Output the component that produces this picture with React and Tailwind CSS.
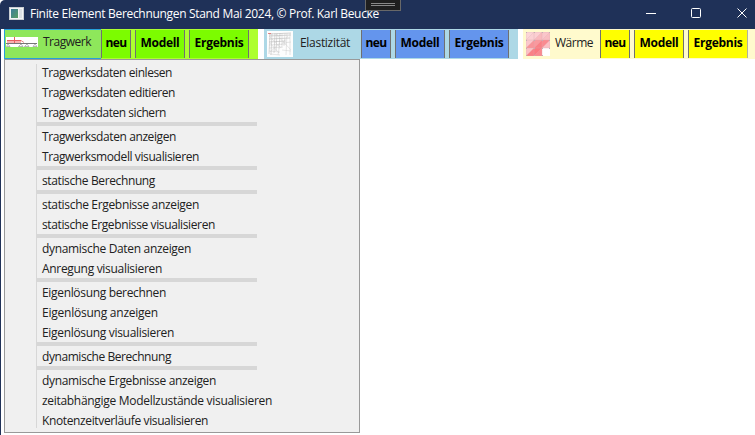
import React from "react";

const sections = [
  [
    ["Tragwerksdaten einlesen", "w-[130px]"],
    ["Tragwerksdaten editieren", "w-[133px]"],
    ["Tragwerksdaten sichern", "w-[124px]"],
  ],
  [
    ["Tragwerksdaten anzeigen", "w-[134px]"],
    ["Tragwerksmodell visualisieren", "w-[157px]"],
  ],
  [["statische Berechnung", "w-[113px]"]],
  [
    ["statische Ergebnisse anzeigen", "w-[157px]"],
    ["statische Ergebnisse visualisieren", "w-[173px]"],
  ],
  [
    ["dynamische Daten anzeigen", "w-[149px]"],
    ["Anregung visualisieren", "w-[120px]"],
  ],
  [
    ["Eigenlösung berechnen", "w-[124px]"],
    ["Eigenlösung anzeigen", "w-[116px]"],
    ["Eigenlösung visualisieren", "w-[132px]"],
  ],
  [["dynamische Berechnung", "w-[129px]"]],
  [
    ["dynamische Ergebnisse anzeigen", "w-[174px]"],
    ["zeitabhängige Modellzustände visualisieren", "w-[230px]"],
    ["Knotenzeitverläufe visualisieren", "w-[166px]"],
  ],
];

// Text whose letter spacing is adjusted so that it fills the width of its box.
function Fit({ className, children }) {
  const box = React.useRef(null);
  const ink = React.useRef(null);
  React.useLayoutEffect(() => {
    const apply = () => {
      ink.current.style.letterSpacing = "0px";
      const natural = ink.current.getBoundingClientRect().width;
      const space = (box.current.clientWidth - natural) / children.length;
      ink.current.style.letterSpacing = `${space}px`;
    };
    apply();
    document.fonts.ready.then(apply);
  }, [children]);
  return (
    <span ref={box} className={`block shrink-0 whitespace-nowrap ${className}`}>
      <span ref={ink} className="inline-block">{children}</span>
    </span>
  );
}

function AppIcon() {
  return (
    <svg width="15" height="13" viewBox="0 0 15 13" shapeRendering="crispEdges">
      <defs>
        <linearGradient id="pane" x1="0" y1="0" x2="1" y2="1">
          <stop offset="0" stopColor="#3d7d9b" />
          <stop offset="1" stopColor="#579e62" />
        </linearGradient>
      </defs>
      <rect width="15" height="13" fill="#c9ced2" />
      <rect x="1" y="1" width="13" height="11" fill="#f3f5f6" />
      <rect x="2" y="2" width="7" height="9" fill="url(#pane)" />
      <rect x="10" y="2" width="3" height="9" fill="#dce1e4" />
    </svg>
  );
}

function BeamIcon() {
  return (
    <svg width="32" height="10" viewBox="0 0 32 10">
      <rect width="32" height="10" fill="#fff" />
      <rect x="1" y="3" width="14" height="3" fill="#f7b0b0" />
      <path d="M1 3.5H15M8.5 0V7" stroke="#e86060" fill="none" />
      <path d="M15 3.5L18 5.5" stroke="#e98a8a" fill="none" />
      <path d="M0 6.5H31" stroke="#777" fill="none" />
      <path d="M2 7L.5 9.5H4ZM15 7L12.5 9.5H17ZM21 7L18.5 9.5H23ZM29 7L27 9.5H31Z" fill="none" stroke="#888" strokeWidth=".6" />
    </svg>
  );
}

function MeshIcon() {
  return (
    <svg width="26" height="26" viewBox="0 0 26 26">
      <rect width="26" height="26" fill="#fdfdfd" />
      <path d="M2 3L24 2M2 5L24 4M2 8L23 7M2 11L19 10" stroke="#a8a8a8" strokeWidth=".5" />
      <path d="M2 14L19 13M2 17L15 16M2 20L13 21M3 23L13 24M16 12L24 11M15 19L24 20" stroke="#c8c8c8" strokeWidth=".45" />
      <path d="M3 2L2 23M5 2L4 24M8 2L7 22M10 2L9 20M13 2L12 18" stroke="#b4b4b4" strokeWidth=".5" />
      <path d="M15 2L15 17M18 2L17 15M20 2L19 24M23 2L23 24M12 18L11 24" stroke="#c6c6c6" strokeWidth=".45" />
      <path d="M2 5L14 17M3 12L12 22M9 3L24 19M14 14L21 5M3 21L13 12" stroke="#ccc" strokeWidth=".45" />
      <path d="M1 2.5H4" stroke="#d66" strokeWidth=".8" />
    </svg>
  );
}

function HeatIcon() {
  const tiles = [
    [0, 0, "#fbd5d8", "#fbd0d3"], [8, 0, "#fbcfd2", "#f9b9bd"], [16, 0, "#fac6ca", "#f9bdc1"],
    [0, 8, "#fac8cc", "#f89499"], [8, 8, "#f9999e", "#fa8085"], [16, 8, "#fa8b90", "#fac0c4"],
    [0, 16, "#fbc0c4", "#f98186"], [8, 16, "#fa7b80", "#f98a8f"],
  ];
  return (
    <svg width="24" height="24" viewBox="0 0 24 24">
      <rect width="24" height="24" fill="#fff" />
      {tiles.map(([x, y, a, b]) => (
        <g key={`${x}-${y}`}>
          <rect x={x} y={y} width="8" height="8" fill={a} />
          <path d={`M${x} ${y + 8}L${x + 8} ${y}V${y + 8}Z`} fill={b} />
          <path d={`M${x} ${y + 8}L${x + 8} ${y}`} stroke="#e2b0b4" strokeWidth=".3" />
        </g>
      ))}
      <path d="M0 8H24M0 16H24M8 0V24M16 0V24M0 0H24M0 0V24H16M24 0V16" fill="none" stroke="#dda8ad" strokeWidth=".35" />
      {[0, 8, 16, 23].map((x) => [0, 8, 16, 23].map((y) => (
        <rect key={`${x}/${y}`} x={x} y={y} width="1" height="1" fill={x === 23 && y === 23 ? "#fff" : "#c0b0b4"} />
      )))}
    </svg>
  );
}

function Tool({ label, className, textWidth }) {
  return (
    <div className={`flex h-7 shrink-0 items-center justify-center border-x border-[#707070] pb-[3px] text-[12px] font-bold ${className}`}>
      <Fit className={textWidth}>{label}</Fit>
    </div>
  );
}

function Tools({ lastEdge = "", color, neuWidth }) {
  return (
    <>
      <Tool label="neu" className={`${color} ${neuWidth} mr-1`} textWidth="w-[21px]" />
      <Tool label="Modell" className={`${color} mr-1 w-[50px]`} textWidth="w-[39px]" />
      <Tool label="Ergebnis" className={`${color} ${lastEdge} w-[60px]`} textWidth="w-[49px]" />
    </>
  );
}

export default function App() {
  return (
    <div className="flex h-[435px] w-[755px] flex-col overflow-hidden rounded-tl-[5px] bg-white font-['Open_Sans','Noto_Sans',sans-serif] text-[12px] leading-[16px] text-[#212121]">
      <header className="relative flex h-[29px] shrink-0 items-center bg-[#1f3158] pl-[9px] text-white">
        <div className="pb-[3px]"><AppIcon /></div>
        <Fit className="ml-[6px] w-[349px] pb-px">Finite Element Berechnungen Stand Mai 2024, © Prof. Karl Beucke</Fit>
        <svg className="ml-auto mr-[8px]" width="102" height="29" fill="none" stroke="#fff">
          <path d="M1 13.5H11" />
          <rect x="46.5" y="8.5" width="9" height="9" rx="1" />
          <path d="M92.5 8.5L101.5 17.5M101.5 8.5L92.5 17.5" />
        </svg>
        <div className="absolute left-[365px] top-0 flex h-[11px] w-[36px] flex-col items-center gap-px border border-t-0 border-[#686868] bg-[#1f1f1f] pt-[3px]">
          <div className="h-px w-[24px] bg-[#888]" />
          <div className="h-px w-[24px] bg-[#888]" />
        </div>
      </header>

      <div className="flex grow flex-col border-l border-[#1f3158] pl-[3px]">
        <nav className="flex h-[30px] shrink-0">
          <div className="flex w-[254px] items-center bg-[#adff2f]">
            <div className="flex h-[30px] w-[97px] items-center border border-r-0 border-[#26a0da] bg-[#8ee75b] pl-px">
              <div className="pb-[4px]"><BeamIcon /></div>
              <Fit className="ml-[5px] w-[48px] pb-[4px]">Tragwerk</Fit>
            </div>
            <Tools color="bg-[#7cfc00] text-black" neuWidth="w-[30px]" />
          </div>
          <div className="ml-[6px] flex w-[254px] items-center bg-[#add8e6]">
            <div className="flex w-[97px] items-center pl-[3px]">
              <MeshIcon />
              <Fit className="ml-[7px] w-[50px] pb-[3px]">Elastizität</Fit>
            </div>
            <Tools color="bg-[#6495ed] text-black" neuWidth="w-[30px]" />
          </div>
          <div className="ml-[5px] flex grow items-center bg-[#fffacd]">
            <div className="flex w-[77px] items-center pl-[3px]">
              <HeatIcon />
              <Fit className="ml-[5px] w-[38px] pb-[3px]">Wärme</Fit>
            </div>
            <Tools color="bg-[#ffff00] text-black" neuWidth="w-[30px]" lastEdge="border-r-[#b0b0a0]" />
          </div>
        </nav>

        <div className="flex h-[374px] w-[356px] border border-[#999] bg-[#f0f0f0] pl-[31px] pt-[2px]">
          <div className="mt-[2px] h-[364px] w-px bg-[#d7d7d7]" />
          <div>
            {sections.map((rows, i) => (
              <React.Fragment key={i}>
                {i > 0 && <div className="h-1 w-[220px] bg-[#d7d7d7]" />}
                {rows.map(([label, width]) => (
                  <div key={label} className="flex h-5 items-center pl-[5px] pt-[2px]">
                    <Fit className={width}>{label}</Fit>
                  </div>
                ))}
              </React.Fragment>
            ))}
          </div>
        </div>
      </div>
    </div>
  );
}
